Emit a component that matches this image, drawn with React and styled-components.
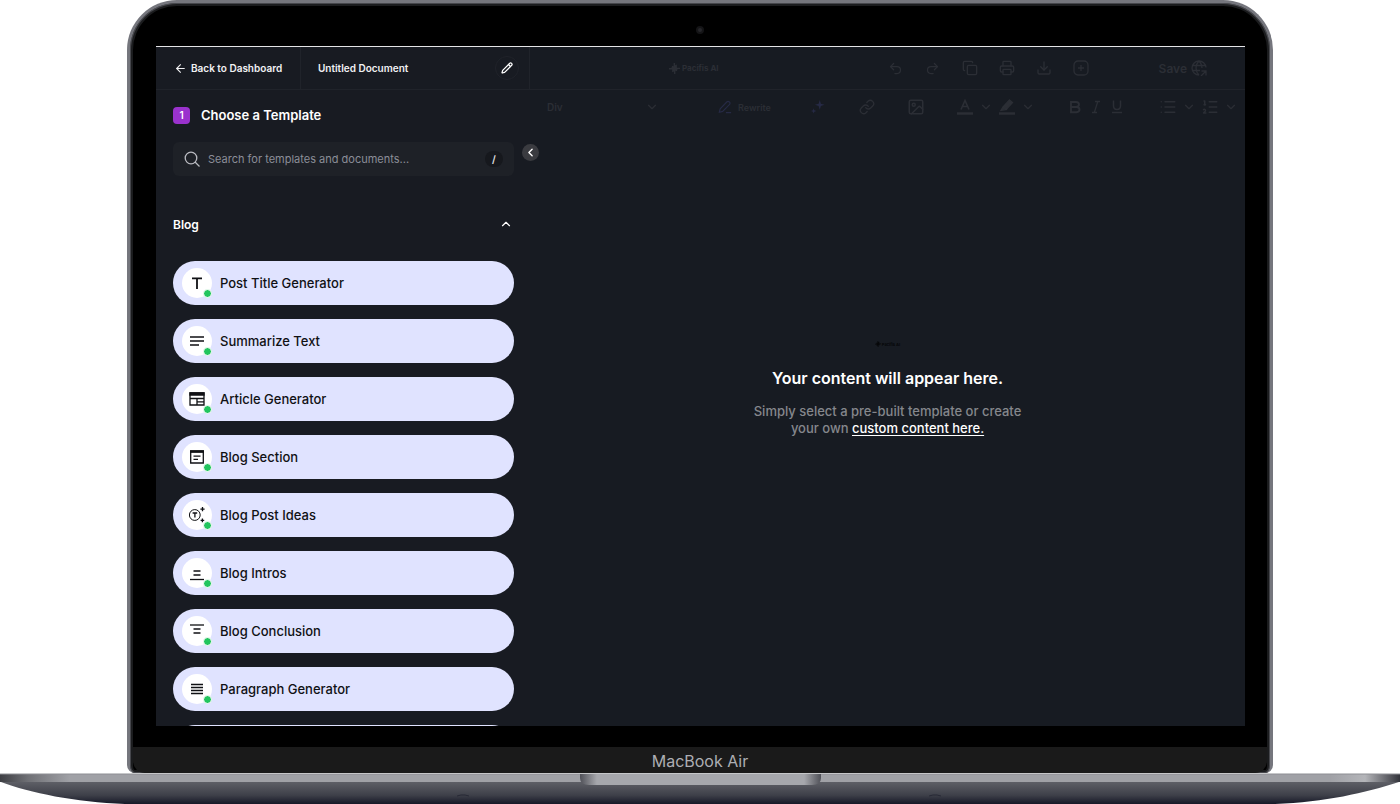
import React, { useState } from "react";
import styled, { createGlobalStyle } from "styled-components";
import {
  ArrowLeft,
  ChevronDown,
  ChevronLeft,
  ChevronUp,
  Copy,
  Download,
  Image as ImageIcon,
  Link as LinkIcon,
  List,
  ListOrdered,
  Pencil,
  Printer,
  Redo2,
  Search,
  Undo2,
} from "lucide-react";

const colors = {
  screen: "#181b22",
  line: "#20232a",
  dim: "#2b2e35",
  field: "#1e2127",
  pill: "#e0e3ff",
  purple: "#9a32cd",
  green: "#22c55e",
};

const GlobalStyle = createGlobalStyle`
  body {
    margin: 0;
    background: #fff;
    font-family: Inter, "Liberation Sans", sans-serif;
  }
  button, input, select {
    font-family: inherit;
  }
  svg {
    flex: none;
  }
`;

const Page = styled.div`
  display: flex;
  flex-direction: column;
  height: 100vh;
  overflow: hidden;
`;

const Lid = styled.div`
  flex: 1;
  min-height: 0;
  display: flex;
  flex-direction: column;
  margin: 0 127px;
  box-sizing: border-box;
  border: solid #75767d;
  border-width: 3px 3px 0;
  border-radius: 50px 50px 8px 8px;
  background: #000;
  box-shadow: inset 0 0 0 1px #46474c, inset 0 0 0 3px #1b1c1e;
  overflow: hidden;
`;

const CameraBar = styled.div`
  flex: none;
  display: flex;
  justify-content: center;
  align-items: flex-end;
  height: 43px;
  padding-bottom: 12px;
  box-sizing: border-box;
`;

const Camera = styled.div`
  width: 4px;
  height: 4px;
  border: 2px solid #141416;
  border-radius: 50%;
  background: #26262a;
`;

const Screen = styled.div`
  flex: 1;
  min-height: 0;
  display: flex;
  margin: 0 25px 0 26px;
  border-top: 1px solid #e4e4e6;
  background: ${colors.screen};
  overflow: hidden;
`;

const Chin = styled.div`
  flex: none;
  height: 26px;
  margin: 21px 3px 0;
  border-radius: 0 0 12px 12px;
  background: #1a1a1a;
  color: #adaeb3;
  font-size: 16px;
  line-height: 28px;
  text-align: center;
`;

const Base = styled.svg`
  display: block;
  width: 100%;
  height: 31px;
`;

const Sidebar = styled.aside`
  position: relative;
  flex: none;
  width: 374px;
  box-sizing: border-box;
`;

const Bar = styled.div`
  display: flex;
  align-items: center;
  height: 43px;
  box-sizing: border-box;
  border-bottom: 1px solid ${colors.line};
`;

const BackLink = styled.a`
  display: flex;
  align-items: center;
  gap: 4px;
  width: 145px;
  height: 100%;
  padding-left: 18px;
  box-sizing: border-box;
  border-right: 1px solid ${colors.line};
  color: #f1f1f3;
  font-size: 10px;
  font-weight: 600;
  text-decoration: none;
`;

const DocTitle = styled.div`
  flex: 1;
  display: flex;
  align-items: center;
  justify-content: space-between;
  height: 100%;
  padding: 0 10px 0 17px;
  border-right: 1px solid ${colors.line};
  color: #f1f1f3;
  font-size: 10px;
  font-weight: 600;
`;

const RoundButton = styled.button`
  display: flex;
  align-items: center;
  justify-content: center;
  width: 24px;
  height: 24px;
  padding: 0;
  border: 1px solid ${colors.line};
  border-radius: 50%;
  background: none;
  color: #fff;
`;

const CollapseButton = styled.button`
  position: absolute;
  top: 97px;
  right: -9px;
  z-index: 1;
  display: flex;
  align-items: center;
  justify-content: center;
  width: 17px;
  height: 17px;
  padding: 0;
  border: none;
  border-radius: 50%;
  background: #3a3b40;
  color: #fff;
`;

const SidebarBody = styled.div`
  padding: 16px 16px 0 17px;
`;

const StepTitle = styled.h2`
  display: flex;
  align-items: center;
  gap: 11px;
  margin: 0;
  color: #fff;
  font-size: 13px;
  font-weight: 600;
  line-height: 18px;
`;

const StepNumber = styled.span`
  width: 17px;
  height: 17px;
  border-radius: 4px;
  background: ${colors.purple};
  font-size: 10px;
  line-height: 17px;
  text-align: center;
`;

const SearchBox = styled.label`
  display: flex;
  align-items: center;
  gap: 8px;
  height: 34px;
  margin-top: 18px;
  padding: 0 11px;
  box-sizing: border-box;
  border-radius: 6px;
  background: ${colors.field};
  color: #b9bac0;
`;

const SearchInput = styled.input`
  flex: 1;
  min-width: 0;
  padding: 0;
  border: none;
  outline: none;
  background: none;
  color: #fff;
  font-size: 11px;
  &::placeholder {
    color: #8b8e98;
    opacity: 1;
  }
`;

const Shortcut = styled.kbd`
  width: 18px;
  height: 16px;
  border-radius: 8px;
  background: #16181d;
  color: #e4e4e6;
  font-family: inherit;
  font-size: 10px;
  font-weight: 600;
  line-height: 16px;
  text-align: center;
`;

const GroupButton = styled.button`
  display: flex;
  align-items: center;
  justify-content: space-between;
  width: 100%;
  height: 20px;
  margin: 38px 0 27px;
  padding: 0 1px 0 0;
  border: none;
  background: none;
  color: #fff;
  font-size: 12px;
  font-weight: 600;
`;

const TemplateList = styled.ul`
  display: flex;
  flex-direction: column;
  gap: 14px;
  margin: 0;
  padding: 0;
  list-style: none;
`;

const TemplateButton = styled.button`
  display: flex;
  align-items: center;
  gap: 8px;
  width: 100%;
  height: 44px;
  padding: 0 9px;
  border: none;
  border-radius: 22px;
  background: ${colors.pill};
  color: #101114;
  font-size: 13px;
  font-weight: 500;
`;

const TemplateIcon = styled.span`
  position: relative;
  display: flex;
  align-items: center;
  justify-content: center;
  width: 30px;
  height: 30px;
  border-radius: 50%;
  background: #fff;
  &::after {
    content: "";
    position: absolute;
    right: 0;
    bottom: 0;
    width: 7px;
    height: 7px;
    border: 1px solid #fff;
    border-radius: 50%;
    background: ${colors.green};
  }
`;

const Editor = styled.main`
  flex: 1;
  min-width: 0;
  background: #171b22;
  color: ${colors.dim};
`;

const EditorBar = styled(Bar)`
  padding: 0 38px 0 139px;
`;

const Brand = styled.span`
  display: flex;
  align-items: center;
  gap: ${({ $small }) => ($small ? 1 : 2)}px;
  font-size: ${({ $small }) => ($small ? 4 : 8)}px;
  font-weight: 700;
  color: ${({ $small }) => ($small ? "#060709" : "inherit")};
`;

const Actions = styled.div`
  display: flex;
  gap: 13px;
  margin-left: auto;
`;

const ToolButton = styled.button`
  flex: none;
  display: flex;
  align-items: center;
  justify-content: center;
  width: ${({ $width }) => $width || 20}px;
  height: 20px;
  padding: 0;
  border: none;
  background: none;
  color: inherit;
`;

const SaveButton = styled.button`
  display: flex;
  align-items: center;
  gap: 4px;
  margin-left: 66px;
  padding: 0;
  border: none;
  background: none;
  color: inherit;
  font-size: 12px;
  font-weight: 600;
`;

const FormatBar = styled.div`
  display: flex;
  align-items: center;
  gap: 29px;
  height: 34px;
  padding-left: 17px;
`;

const BlockSelect = styled.label`
  display: flex;
  align-items: center;
  width: 112px;
  margin-right: 30px;
`;

const Select = styled.select`
  flex: 1;
  padding: 0;
  border: none;
  outline: none;
  appearance: none;
  background: none;
  color: inherit;
  font-size: 10px;
  font-weight: 600;
`;

const RewriteButton = styled.button`
  display: flex;
  align-items: center;
  gap: 6px;
  width: 61px;
  padding: 0;
  border: none;
  background: none;
  color: inherit;
  font-size: 9px;
  font-weight: 600;
`;

const ToolGroup = styled.div`
  display: flex;
  align-items: center;
  gap: 5px;
`;

const LetterGroup = styled(ToolGroup)`
  gap: 1px;
  padding: 0 2px;
`;

const EmptyState = styled.section`
  display: flex;
  flex-direction: column;
  align-items: center;
  padding-top: 217px;
  text-align: center;
`;

const EmptyTitle = styled.h1`
  margin: 20px 0 14px;
  color: #fff;
  font-size: 16px;
  font-weight: 600;
  line-height: 22px;
`;

const EmptyText = styled.p`
  max-width: 280px;
  margin: 0;
  color: #85878c;
  font-size: 13px;
  font-weight: 500;
  line-height: 17px;
  a {
    color: #fff;
    text-underline-offset: 2px;
  }
`;

const Glyph = ({ size = 16, children }) => (
  <svg
    width={size}
    height={size}
    viewBox="0 0 16 16"
    fill="none"
    stroke="currentColor"
    strokeWidth="1.3"
    aria-hidden="true"
  >
    {children}
  </svg>
);

const BrandMark = ({ size }) => (
  <svg width={size} height={size} viewBox="0 0 12 12" fill="currentColor" aria-hidden="true">
    <path d="M5 0h1.600v2.500L8.600 1.500v3.700H12v1.400H9.400L8.600 9 7 8.400V12H5.400V9.200L3.400 10.200V7H0V5.400h2.600L3.400 3 5 3.600z" />
  </svg>
);

const templates = [
  { name: "Post Title Generator", icon: <path d="M3 3.3h10M8 3.3V14" strokeWidth="1.8" /> },
  { name: "Summarize Text", icon: <path d="M1 4h14M1 8h14M1 12h9" /> },
  {
    name: "Article Generator",
    icon: (
      <>
        <path d="M1 2h14v12H1zM1 7.5h14M8 7.5V14M8 10.8h7" />
        <path d="M1 2h14v2H1z" fill="currentColor" />
      </>
    ),
  },
  {
    name: "Blog Section",
    icon: (
      <>
        <path d="M1.7 2h12.6v12H1.7zM4.5 7.2h7M4.5 10.3h4.5" />
        <path d="M1.7 2h12.6v1.2H1.7z" fill="currentColor" />
      </>
    ),
  },
  {
    name: "Blog Post Ideas",
    icon: (
      <>
        <circle cx="5.8" cy="8" r="5.4" strokeWidth="1" />
        <path d="M3.6 6h4.6M5.9 6v4.6" />
        <path d="M11.4 2.2h4.2M13.5.1v4.2M11.6 13.4h3.6M13.4 11.6v3.6" />
      </>
    ),
  },
  {
    name: "Blog Intros",
    icon: (
      <>
        <path d="M4.5 6h7M4.5 10h7" strokeWidth="1.7" />
        <path d="M1 14.500h14" />
      </>
    ),
  },
  {
    name: "Blog Conclusion",
    icon: (
      <>
        <path d="M1 2h14" />
        <path d="M4.5 6h7M4.5 10h7" strokeWidth="1.7" />
      </>
    ),
  },
  { name: "Paragraph Generator", icon: <path d="M2 3.5h12M2 6.5h12M2 9.5h12M2 12.5h12" /> },
  { name: "Blog Outline", icon: <path d="M2 4h12M2 8h12M2 12h12" /> },
];

const LaptopBase = () => (
  <Base viewBox="0 0 1400 31" preserveAspectRatio="none" aria-hidden="true">
    <defs>
      <linearGradient id="deck">
        <stop offset="0" stopColor="#3d3e43" />
        <stop offset="0.02" stopColor="#6f7075" />
        <stop offset="0.05" stopColor="#a0a1a6" />
        <stop offset="0.95" stopColor="#a0a1a6" />
        <stop offset="0.975" stopColor="#b4b5b9" />
        <stop offset="1" stopColor="#33343b" />
      </linearGradient>
      <linearGradient id="under" x2="0" y2="1">
        <stop offset="0" stopColor="#5e5f66" />
        <stop offset="0.6" stopColor="#3e4049" />
        <stop offset="1" stopColor="#161827" />
      </linearGradient>
      <linearGradient id="notch">
        <stop offset="0" stopColor="#505158" />
        <stop offset="0.07" stopColor="#a6a7ac" />
        <stop offset="0.93" stopColor="#a6a7ac" />
        <stop offset="1" stopColor="#505158" />
      </linearGradient>
    </defs>
    <path d="M1 9h1398C1365 20 1325 29 1275 31H125C75 29 30 20 1 9z" fill="url(#under)" />
    <path d="M0 1h1400v8H0z" fill="url(#deck)" />
    <path d="M0 1h1400" stroke="#8d8e93" />
    <path d="M580 1h241v4q0 7-9 7H589q-9 0-9-7z" fill="url(#notch)" />
    <path d="M457 23l4-1h4l4 1M929 23l4-1h4l4 1" stroke="#272935" fill="none" />
  </Base>
);

function App() {
  const [open, setOpen] = useState(true);
  const [query, setQuery] = useState("");

  const shown = templates.filter(({ name }) => name.toLowerCase().includes(query.toLowerCase()));

  return (
    <>
      <GlobalStyle />
      <Page>
        <Lid>
          <CameraBar>
            <Camera />
          </CameraBar>
          <Screen>
            <Sidebar>
              <Bar>
                <BackLink href="#dashboard">
                  <ArrowLeft size={13} />
                  Back to Dashboard
                </BackLink>
                <DocTitle>
                  Untitled Document
                  <RoundButton type="button" aria-label="Rename document">
                    <Pencil size={12} strokeWidth={2.5} />
                  </RoundButton>
                </DocTitle>
              </Bar>
              <CollapseButton type="button" aria-label="Collapse sidebar">
                <ChevronLeft size={13} strokeWidth={2.5} />
              </CollapseButton>
              <SidebarBody>
                <StepTitle>
                  <StepNumber>1</StepNumber>
                  Choose a Template
                </StepTitle>
                <SearchBox>
                  <Glyph>
                    <circle cx="7" cy="7" r="5.800" />
                    <path d="M11 11l4.500 4.500" />
                  </Glyph>
                  <SearchInput
                    aria-label="Search templates"
                    value={query}
                    onChange={(e) => setQuery(e.target.value)}
                    placeholder="Search for templates and documents..."
                  />
                  <Shortcut>/</Shortcut>
                </SearchBox>
                <GroupButton type="button" aria-expanded={open} onClick={() => setOpen(!open)}>
                  Blog
                  <ChevronUp size={14} />
                </GroupButton>
                {open && (
                  <TemplateList>
                    {shown.map(({ name, icon }) => (
                      <li key={name}>
                        <TemplateButton type="button">
                          <TemplateIcon>
                            <Glyph>{icon}</Glyph>
                          </TemplateIcon>
                          {name}
                        </TemplateButton>
                      </li>
                    ))}
                  </TemplateList>
                )}
              </SidebarBody>
            </Sidebar>
            <Editor>
              <EditorBar>
                <Brand>
                  <BrandMark size={11} />
                  Pacifis AI
                </Brand>
                <Actions>
                  <ToolButton $width={24} aria-label="Undo"><Undo2 size={15} /></ToolButton>
                  <ToolButton $width={24} aria-label="Redo"><Redo2 size={15} /></ToolButton>
                  <ToolButton $width={24} aria-label="Copy"><Copy size={16} /></ToolButton>
                  <ToolButton $width={24} aria-label="Print"><Printer size={16} /></ToolButton>
                  <ToolButton $width={24} aria-label="Download"><Download size={16} /></ToolButton>
                  <ToolButton $width={24} aria-label="New">
                    <Glyph>
                      <rect x="1" y="1" width="14" height="14" rx="4" />
                      <path d="M8 5v6M5 8h6" />
                    </Glyph>
                  </ToolButton>
                </Actions>
                <SaveButton type="button">
                  Save
                  <Glyph>
                    <path d="M15 7.500A7 7 0 1 0 8 15M8 1c-4 4-4 10 0 14M8 1c2 2 3 4 3 7M1.500 5.500h13M1.500 10.500H9M10.500 11H15v4.500M15 11l-5 5" />
                  </Glyph>
                </SaveButton>
              </EditorBar>
              <FormatBar>
                <BlockSelect>
                  <Select aria-label="Block type">
                    <option>Div</option>
                  </Select>
                  <ChevronDown size={14} />
                </BlockSelect>
                <RewriteButton type="button">
                  <Glyph size={14}>
                    <path d="M1.500 14l1-4L10 2.300q1.500-1.300 3 0t0 3L5.300 13zM9 14.500h6" stroke="#262a45" />
                  </Glyph>
                  Rewrite
                </RewriteButton>
                <ToolButton aria-label="Magic">
                  <Glyph size={14}>
                    <path
                      d="M10 0l1.300 4.200L15.500 5.500l-4.200 1.300L10 11 8.700 6.800 4.500 5.500l4.200-1.300zM3 9.500l.8 2.200 2.200.8-2.200.8L3 15.500l-.8-2.200L0 12.500l2.200-.8z"
                      fill="#262a45"
                      stroke="none"
                    />
                  </Glyph>
                </ToolButton>
                <ToolButton aria-label="Link"><LinkIcon size={16} /></ToolButton>
                <ToolButton aria-label="Image">
                  <ImageIcon size={18} />
                </ToolButton>
                <ToolGroup>
                  <ToolButton aria-label="Text color">
                    <Glyph>
                      <path d="M4 10.500l4-9 4 9M5.500 7.500h5" strokeWidth="1.600" />
                      <path d="M0 14.500h16" strokeWidth="2.500" />
                    </Glyph>
                  </ToolButton>
                  <ToolButton $width={12} aria-label="Text colors"><ChevronDown size={14} /></ToolButton>
                  <ToolButton aria-label="Highlight">
                    <Glyph>
                      <path d="M10.500 1l3 2.500-6 6.500-3-2.500zM4 8l3 2.500-5 .8z" fill="currentColor" />
                      <path d="M0 14.500h16" strokeWidth="2.500" />
                    </Glyph>
                  </ToolButton>
                  <ToolButton $width={12} aria-label="Highlight colors"><ChevronDown size={14} /></ToolButton>
                </ToolGroup>
                <LetterGroup>
                  <ToolButton aria-label="Bold">
                    <Glyph>
                      <path d="M4 3h5q3 .2 3 2.500T9 8H4zM4 8h5.500q3 .2 3 2.500t-3 2.700H4z" strokeWidth="1.900" />
                    </Glyph>
                  </ToolButton>
                  <ToolButton aria-label="Italic">
                    <Glyph>
                      <path d="M7 2.500h5M4 13.500h5M9.800 2.500l-3.500 11" />
                    </Glyph>
                  </ToolButton>
                  <ToolButton aria-label="Underline">
                    <Glyph>
                      <path d="M4.500 1.500V7q.2 3.500 3.500 3.500T11.500 7V1.500M3 13.500h10" strokeWidth="1.500" />
                    </Glyph>
                  </ToolButton>
                </LetterGroup>
                <ToolGroup>
                  <ToolButton aria-label="Bulleted list"><List size={18} /></ToolButton>
                  <ToolButton $width={12} aria-label="Bullet styles"><ChevronDown size={14} /></ToolButton>
                  <ToolButton aria-label="Numbered list"><ListOrdered size={18} /></ToolButton>
                  <ToolButton $width={12} aria-label="Number styles"><ChevronDown size={14} /></ToolButton>
                </ToolGroup>
              </FormatBar>
              <EmptyState>
                <Brand $small>
                  <BrandMark size={6} />
                  Pacifis AI
                </Brand>
                <EmptyTitle>Your content will appear here.</EmptyTitle>
                <EmptyText>
                  Simply select a pre-built template or create your own{" "}
                  <a href="#custom">custom content here.</a>
                </EmptyText>
              </EmptyState>
            </Editor>
          </Screen>
          <Chin>MacBook Air</Chin>
        </Lid>
        <LaptopBase />
      </Page>
    </>
  );
}

export default App;
